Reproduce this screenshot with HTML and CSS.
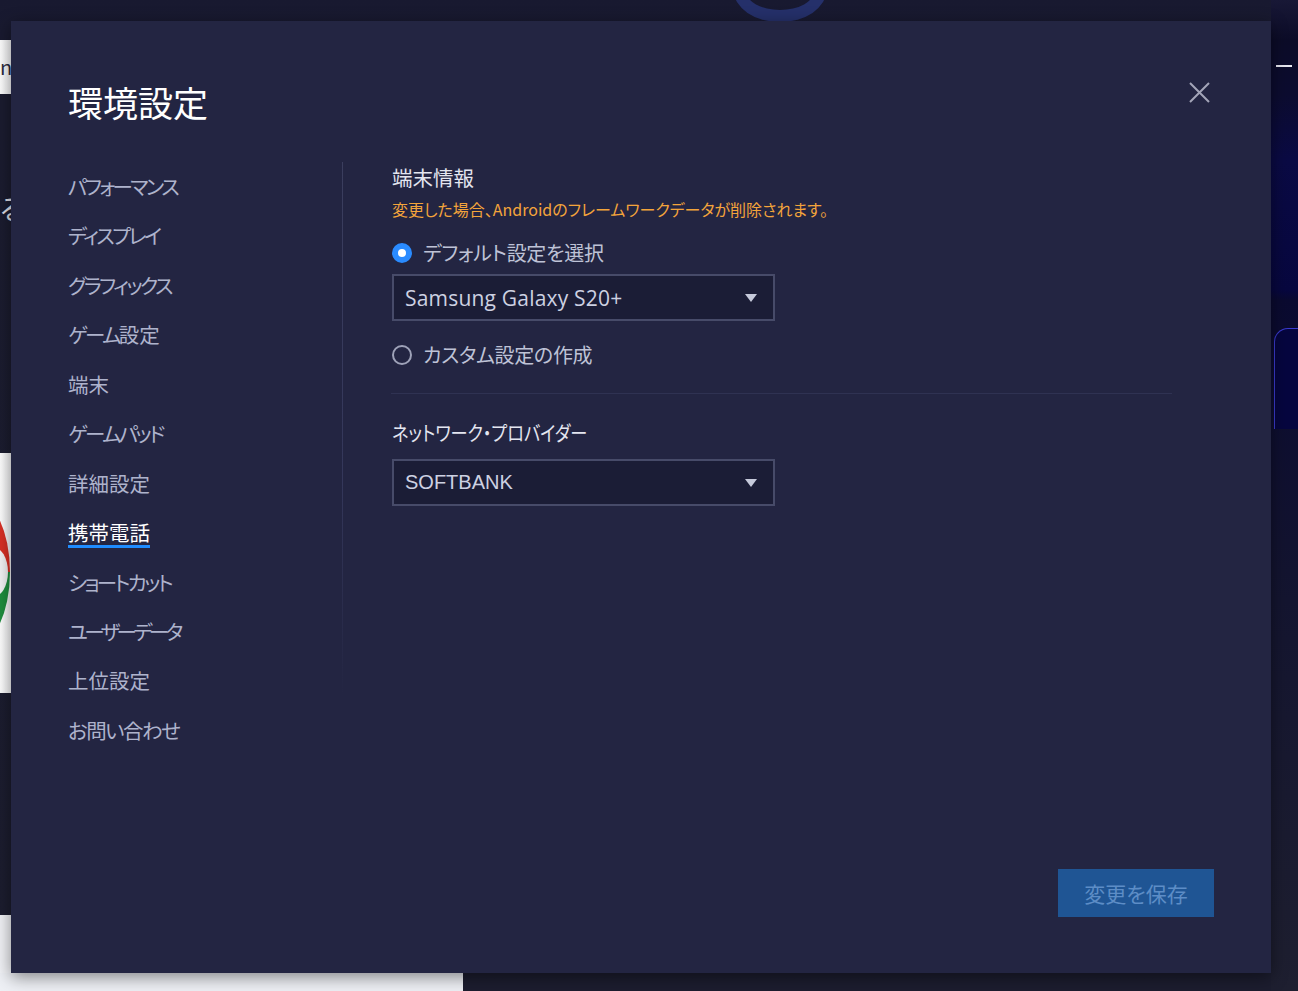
FILE: index.html
```html
<!DOCTYPE html>
<html lang="ja">
    <head>
        <meta charset="UTF-8">
        <meta name="viewport" content="width=device-width, initial-scale=1.0">
        <title>環境設定</title>
        <link rel="stylesheet" href="styles.css">
    </head>
    <body>
        <!-- app behind the dialog -->
        <div class="backdrop">
            <div class="bg-card bg-card-top">n</div>
            <div class="bg-char">る</div>
            <div class="bg-card bg-card-mid"><span class="chrome"></span></div>
            <div class="bg-card bg-card-bottom"></div>
            <div class="bg-bottom"></div>
            <div class="bg-target"></div>
            <div class="bg-right">
                <span class="bg-minimize"></span>
                <span class="bg-panel"></span>
            </div>
        </div>

        <div class="modal">
            <button class="close-btn" aria-label="閉じる">
                <svg width="21" height="21" viewBox="0 0 21 21">
                    <path d="M1 1 L20 20 M20 1 L1 20" stroke="#a3a5b8" stroke-width="2" fill="none"/>
                </svg>
            </button>

            <h1 class="titulo">環境設定</h1>

            <div class="modal-body">
                <nav class="menu">
                    <a href="#" class="kana">パフォーマンス</a>
                    <a href="#" class="kana">ディスプレイ</a>
                    <a href="#" class="kana">グラフィックス</a>
                    <a href="#"><span class="kana">ゲーム</span>設定</a>
                    <a href="#">端末</a>
                    <a href="#" class="kana">ゲームパッド</a>
                    <a href="#">詳細設定</a>
                    <a href="#" class="active">携帯電話</a>
                    <a href="#" class="kana">ショートカット</a>
                    <a href="#" class="kana kana-largo">ユーザーデータ</a>
                    <a href="#">上位設定</a>
                    <a href="#" class="kana-leve">お問い合わせ</a>
                </nav>

                <section class="conteudo">
                    <h2 class="secao">端末情報</h2>
                    <p class="aviso">変更した場合、Androidのフレームワークデータが削除されます。</p>

                    <label class="radio">
                        <span class="radio-dot checked"></span>
                        デフォルト設定を選択
                    </label>
                    <div class="select">
                        <span>Samsung Galaxy S20+</span>
                        <span class="seta"></span>
                    </div>

                    <label class="radio radio-custom">
                        <span class="radio-dot"></span>
                        カスタム設定の作成
                    </label>

                    <hr class="divisor">

                    <h2 class="secao secao-rede"><span>ネットワーク・プロバイダー</span></h2>
                    <div class="select select-rede">
                        <span>SOFTBANK</span>
                        <span class="seta"></span>
                    </div>
                </section>
            </div>

            <div class="rodape">
                <button class="salvar">変更を保存</button>
            </div>
        </div>
    </body>
</html>
```

FILE: styles.css
```css
body {
    margin: 0;
    padding: 0;
    width: 1298px;
    height: 991px;
    overflow: hidden;
    position: relative;
    font-family: "Noto Sans CJK JP", "Noto Sans", sans-serif;
    font-feature-settings: "palt";
    background-color: #1c1d2f;
}

/* ---- background app (partly hidden by the dialog) ---- */
.backdrop {
    position: absolute;
    inset: 0;
    background: linear-gradient(#181930 0, #1b1c30 100px, #1c1d2f 100%);
}

.bg-card {
    position: absolute;
    left: 0;
    width: 30px;
    background: linear-gradient(90deg, #ffffff, #dcdde2);
    overflow: hidden;
}

.bg-card-top {
    top: 40px;
    height: 54px;
    font-size: 20px;
    line-height: 54px;
    color: #2a2a40;
}

.bg-char {
    position: absolute;
    left: 0;
    top: 188px;
    width: 11px;
    overflow: hidden;
    font-size: 28px;
    color: #e0e0e8;
}

.bg-card-mid {
    top: 453px;
    height: 240px;
}

.chrome {
    position: absolute;
    left: -64px;
    top: 44px;
    width: 74px;
    height: 150px;
    border-radius: 50%;
    background: linear-gradient(#d93025 0 50%, #1e8e3e 50% 100%);
}

.chrome::after {
    content: "";
    position: absolute;
    right: 2px;
    top: 50px;
    width: 30px;
    height: 50px;
    border-radius: 50%;
    background: #f4f4f6;
}

.bg-card-bottom {
    top: 915px;
    height: 76px;
    background: #f1f2f6;
}

.bg-bottom {
    position: absolute;
    left: 0;
    top: 973px;
    width: 463px;
    height: 18px;
    background: #eef0f5;
}

.bg-target {
    position: absolute;
    left: 734px;
    top: -40px;
    width: 92px;
    height: 62px;
    border-radius: 50%;
    border: 12px solid #25306a;
    box-sizing: border-box;
}

.bg-right {
    position: absolute;
    left: 1271px;
    top: 0;
    width: 27px;
    height: 991px;
    background: linear-gradient(#181836 0, #0c0c28 40px, #0c0c30 95px, #0a0a44 160px, #07073f 290px, #0a0a30 300px, #141530 600px, #1e1f30 100%);
}

.bg-minimize {
    position: absolute;
    left: 5px;
    top: 65px;
    width: 16px;
    height: 2px;
    background: #e8e8f0;
}

.bg-panel {
    position: absolute;
    left: 3px;
    top: 328px;
    width: 40px;
    height: 100px;
    border-left: 1px solid #3a3ad0;
    border-top: 1px solid #3a3ad0;
    border-radius: 14px 0 0 0;
    background: #06063f;
}

/* ---- dialog ---- */
.modal {
    position: absolute;
    left: 11px;
    top: 21px;
    width: 1260px;
    height: 952px;
    box-sizing: border-box;
    padding: 56px 57px 56px;
    background-color: #232542;
    box-shadow: 0 4px 16px rgba(0, 0, 0, 0.45);
    display: flex;
    flex-direction: column;
    color: #ffffff;
}

.close-btn {
    position: absolute;
    top: 61px;
    right: 61px;
    width: 21px;
    height: 21px;
    padding: 0;
    border: none;
    background: none;
    cursor: pointer;
}

.close-btn svg {
    display: block;
}

.titulo {
    margin: 0;
    font-size: 35px;
    font-weight: 400;
    line-height: 50px;
    color: #ffffff;
}

.modal-body {
    display: flex;
    margin-top: 35px;
    flex: 1;
}

.menu {
    width: 275px;
    height: 536px;
    padding-top: 9px;
    box-sizing: border-box;
    display: flex;
    flex-direction: column;
    align-items: flex-start;
    border-right: 1px solid transparent;
    border-image: linear-gradient(#3b3e5e, #34375a 60%, rgba(52, 55, 90, 0)) 1;
}

.menu a {
    font-size: 20.5px;
    line-height: 30px;
    margin-bottom: 19.45px;
    color: #aeb3cc;
    text-decoration: none;
    white-space: nowrap;
}

.menu .kana {
    letter-spacing: -2.6px;
}

.menu .kana-largo {
    letter-spacing: -3.6px;
}

.menu .kana-leve {
    letter-spacing: -1.5px;
}

.menu a.active {
    color: #ffffff;
    padding-bottom: 1px;
    margin-bottom: 18.45px;
    background: linear-gradient(#1f8cff, #1f8cff) no-repeat 0 28px / 100% 3px;
}

.conteudo {
    padding-left: 49px;
    flex: 1;
}

.secao {
    margin: 0;
    font-size: 20.5px;
    font-weight: 400;
    line-height: 30px;
    color: #e4e6f0;
}

.aviso {
    margin: 5px 0 0;
    font-size: 16px;
    line-height: 24px;
    color: #f3a43b;
}

.radio {
    display: flex;
    align-items: center;
    gap: 11px;
    margin-top: 17px;
    font-size: 20px;
    line-height: 30px;
    color: #bec2d6;
    letter-spacing: -0.3px;
    cursor: pointer;
}

.radio-custom {
    margin-top: 19px;
}

.radio-dot {
    width: 20px;
    height: 20px;
    box-sizing: border-box;
    border-radius: 50%;
    border: 2px solid #9ea2b8;
}

.radio-dot.checked {
    border: 6px solid #2a8bff;
    background: #ffffff;
}

.select {
    margin-top: 6px;
    width: 383px;
    height: 47px;
    box-sizing: border-box;
    padding: 0 16px 0 11px;
    display: flex;
    align-items: center;
    justify-content: space-between;
    background-color: #1b1d36;
    border: 2px solid #474b69;
    font-family: "Open Sans", "Noto Sans", sans-serif;
    font-size: 21px;
    letter-spacing: 0.2px;
    color: #cdd1e2;
}

.seta {
    width: 0;
    height: 0;
    border-left: 6.5px solid transparent;
    border-right: 6.5px solid transparent;
    border-top: 8px solid #c6cadb;
}

.divisor {
    margin: 23px 0 0 -1px;
    width: 781px;
    border: none;
    height: 1px;
    background-color: #2f3252;
}

.secao-rede {
    margin-top: 23px;
}

.secao-rede span {
    display: inline-block;
    transform: scaleX(0.84);
    transform-origin: left center;
    white-space: nowrap;
}

.select-rede {
    margin-top: 12px;
}

.select-rede span:first-child {
    font-family: "Liberation Sans", sans-serif;
    font-size: 20px;
    letter-spacing: 0;
}

.rodape {
    display: flex;
    justify-content: flex-end;
}

.salvar {
    width: 156px;
    height: 48px;
    border: none;
    background-color: #1f5594;
    color: #5d8dc6;
    font-family: inherit;
    font-feature-settings: "palt";
    font-size: 21px;
    cursor: pointer;
}
```
